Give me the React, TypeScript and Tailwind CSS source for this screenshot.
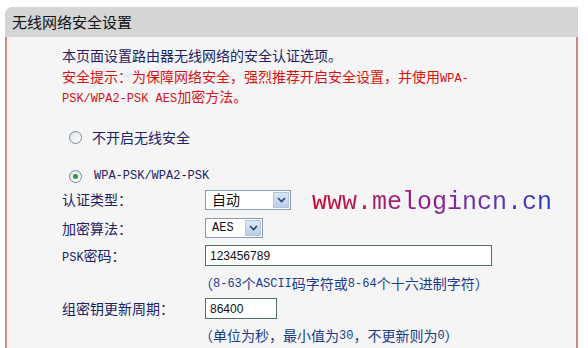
import React from 'react'

const cjk = '"Noto Sans CJK SC", "Liberation Sans", sans-serif'

function Mono({ children }: { children: React.ReactNode }) {
  return <span className="font-['Liberation_Mono',monospace] text-[12px] leading-none">{children}</span>
}

function Radio({ checked }: { checked?: boolean }) {
  return (
    <span className="flex h-[13px] w-[13px] items-center justify-center rounded-full border border-[#7b8a9c] bg-gradient-to-br from-[#dfe3e8] to-white">
      {checked && <span className="h-[5px] w-[5px] rounded-full bg-[#2f9a3a]" />}
    </span>
  )
}

function Select({ value, width, mono }: { value: string; width: string; mono?: boolean }) {
  return (
    <div className={`flex h-[20px] items-center justify-between border border-[#8a9bb0] bg-white pl-[6px] pr-[1px] ${width}`}>
      <span className={mono ? "font-['Liberation_Mono',monospace] text-[12px] text-[#111]" : 'text-[14px] text-[#111]'}>
        {value}
      </span>
      <span className="flex h-[16px] w-[16px] items-center justify-center border border-[#b4c6de] bg-gradient-to-b from-[#dce8f7] to-[#b9cde8]">
        <svg width="9" height="6" viewBox="0 0 9 6">
          <path d="M1 1 L4.5 4.5 L8 1" fill="none" stroke="#2b3f6b" strokeWidth="1.6" />
        </svg>
      </span>
    </div>
  )
}

function Input({ value, width }: { value: string; width: string }) {
  return (
    <div className={`flex h-[21px] items-center border border-[#566f5e] bg-white pl-[4px] ${width}`}>
      <span className="font-['Liberation_Sans',sans-serif] text-[12px] text-[#111]">{value}</span>
    </div>
  )
}

export default function App() {
  return (
    <div className="h-[348px] w-[588px] overflow-hidden bg-white pl-[5px] pt-[7px]" style={{ fontFamily: cjk }}>
      <div className="w-[573px]">
        <div className="flex h-[30px] items-center rounded-tl-[7px] rounded-tr-[2px] bg-[#d5d5d5] pl-[7px] text-[15px] text-[#111]">
          无线网络安全设置
        </div>
        <div className="relative h-[311px] border-l-2 border-r-2 border-[#c98a8a] bg-[#f5f5f5] pl-[55px] pt-[8px]">
          <div className="text-[14px] leading-[20.5px]">
            <p className="text-[#1c2266]">本页面设置路由器无线网络的安全认证选项。</p>
            <p className="text-[#d41313]">
              安全提示：为保障网络安全，强烈推荐开启安全设置，并使用<Mono>WPA-</Mono>
            </p>
            <p className="text-[#d41313]">
              <Mono>PSK/WPA2-PSK AES</Mono>加密方法。
            </p>
          </div>

          <div className="mt-[20px] flex h-[21px] items-center gap-[10px] pl-[7px] text-[14px] text-[#1c2266]">
            <Radio />
            <span>不开启无线安全</span>
          </div>
          <div className="mt-[18px] flex h-[21px] items-center gap-[12px] pl-[7px] text-[#1c2266]">
            <Radio checked />
            <Mono>WPA-PSK/WPA2-PSK</Mono>
          </div>

          <div className="text-[14px] text-[#1c2266]">
            <div className="mt-[2px] flex h-[22px] items-center">
              <span className="w-[143px]">认证类型：</span>
              <Select value="自动" width="w-[86px]" />
            </div>
            <div className="mt-[7px] flex h-[21px] items-center">
              <span className="w-[143px]">加密算法：</span>
              <Select value="AES" width="w-[58px]" mono />
            </div>
            <div className="mt-[6px] flex h-[22px] items-center">
              <span className="w-[143px]">
                <Mono>PSK</Mono>密码：
              </span>
              <Input value="123456789" width="w-[287px]" />
            </div>
            <div className="mt-[7px] flex h-[20px] items-center pl-[137px] text-[#1a3b8c]">
              （<Mono>8-63</Mono>个<Mono>ASCII</Mono>码字符或<Mono>8-64</Mono>个十六进制字符）
            </div>
            <div className="mt-[4px] flex h-[22px] items-center">
              <span className="w-[143px]">组密钥更新周期：</span>
              <Input value="86400" width="w-[72px]" />
            </div>
            <div className="mt-[6px] flex h-[20px] items-center pl-[137px] text-[#1a3b8c]">
              （单位为秒，最小值为<Mono>30</Mono>，不更新则为<Mono>0</Mono>）
            </div>
          </div>

          <div className="absolute left-[305px] top-[151px] bg-gradient-to-r from-[#c8002e] via-[#8c1c8e] to-[#2a3cc8] bg-clip-text font-['Liberation_Mono',monospace] text-[25px] leading-[30px] text-transparent">
            www.melogincn.cn
          </div>
        </div>
      </div>
    </div>
  )
}
